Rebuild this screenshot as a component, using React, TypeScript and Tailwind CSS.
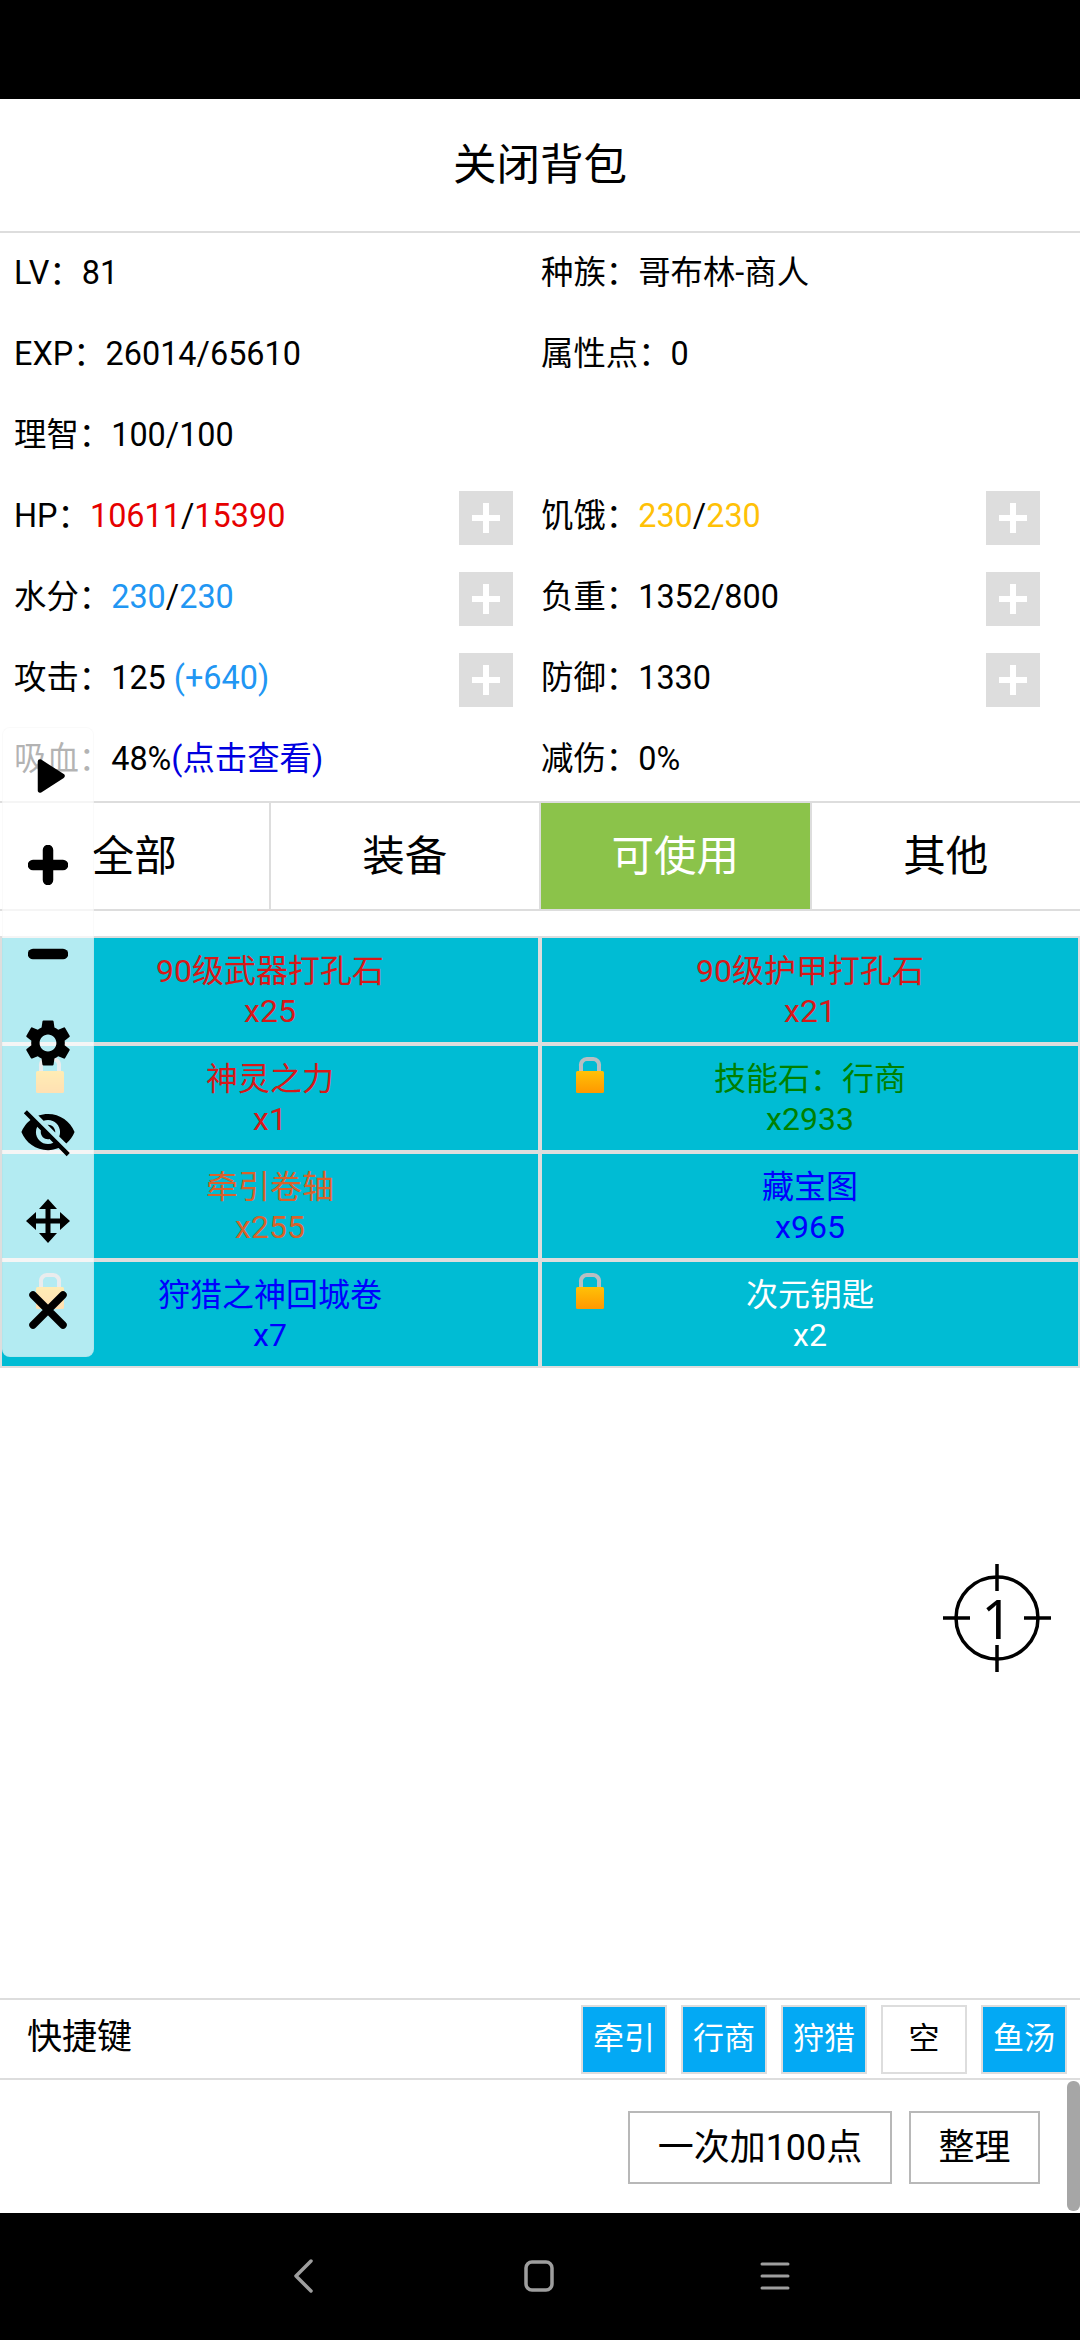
import React from "react";
import { MdSettings, MdVisibilityOff } from "react-icons/md";

const FONT = "font-['Roboto','Noto_Sans_CJK_SC',sans-serif]";

function Plus() {
  return (
    <div className="w-[54px] h-[54px] mt-[2px] bg-[#dddddd] flex items-center justify-center shrink-0">
      <svg width="28" height="30" viewBox="0 0 28 30">
        <path d="M0 12h28v6H0zM11 0h6v30h-6z" fill="#ffffff" />
      </svg>
    </div>
  );
}

function Lock({ className }: { className: string }) {
  return (
    <svg className={className} width="28" height="36" viewBox="0 0 28 36">
      <defs>
        <linearGradient id="lockb" x1="0" y1="0" x2="0" y2="1">
          <stop offset="0" stopColor="#ffc107" />
          <stop offset="1" stopColor="#ff9800" />
        </linearGradient>
      </defs>
      <path d="M5 15V9a6 6 0 0 1 6-7h6a6 6 0 0 1 6 7v6" fill="none" stroke="#b9bec2" strokeWidth="4" />
      <rect x="0" y="14" width="28" height="22" rx="1.5" fill="url(#lockb)" />
    </svg>
  );
}

function Stat({ label, children, plus }: { label: string; children: React.ReactNode; plus?: boolean }) {
  return (
    <div className="h-[81px] flex items-center justify-between pr-[14px]">
      <div className="pl-[14px] text-[32.4px] leading-none whitespace-nowrap">
        {label}：{children}
      </div>
      {plus && <Plus />}
    </div>
  );
}

function Row({ left, right }: { left: React.ReactNode; right: React.ReactNode }) {
  return (
    <div className="grid grid-cols-[527px_527px] gap-x-0">
      {left}
      {right}
    </div>
  );
}

function Item({ name, count, color, lock }: { name: string; count: string; color: string; lock?: boolean }) {
  return (
    <div className={`relative h-[104px] bg-[#00bcd4] flex flex-col items-center justify-center pt-[2px] text-[32px] leading-[40px] ${color}`}>
      {lock && <Lock className="absolute left-[34px] top-[11px]" />}
      <div>{name}</div>
      <div>{count}</div>
    </div>
  );
}

function Key({ label, empty }: { label: string; empty?: boolean }) {
  return (
    <div
      className={`w-[86px] h-[69px] border-2 border-[#dddddd] flex items-center justify-center text-[31px] ${
        empty ? "bg-white text-black" : "bg-[#03a9f4] text-white"
      }`}
    >
      {label}
    </div>
  );
}

function FloatIcon({ children }: { children: React.ReactNode }) {
  return <div className="h-[89px] flex items-center justify-center">{children}</div>;
}

export default function App() {
  return (
    <div className={`relative w-[1080px] h-[2340px] bg-white text-black overflow-hidden flex flex-col ${FONT}`}>
      <div className="h-[99px] bg-black shrink-0" />

      <div className="h-[134px] pt-[2px] border-b-[2px] border-[#dddddd] flex items-center justify-center text-[43.5px] shrink-0">
        关闭背包
      </div>

      <div className="shrink-0 pb-[1px]">
        <Row left={<Stat label="LV">81</Stat>} right={<Stat label="种族">哥布林-商人</Stat>} />
        <Row left={<Stat label="EXP">26014/65610</Stat>} right={<Stat label="属性点">0</Stat>} />
        <Row left={<Stat label="理智">100/100</Stat>} right={<div />} />
        <Row
          left={
            <Stat label="HP" plus>
              <span className="text-[#e60000]">10611</span>/<span className="text-[#e60000]">15390</span>
            </Stat>
          }
          right={
            <Stat label="饥饿" plus>
              <span className="text-[#ffc107]">230</span>/<span className="text-[#ffc107]">230</span>
            </Stat>
          }
        />
        <Row
          left={
            <Stat label="水分" plus>
              <span className="text-[#2196f3]">230</span>/<span className="text-[#2196f3]">230</span>
            </Stat>
          }
          right={<Stat label="负重" plus>1352/800</Stat>}
        />
        <Row
          left={
            <Stat label="攻击" plus>
              125 <span className="text-[#2196f3]">(+640)</span>
            </Stat>
          }
          right={<Stat label="防御" plus>1330</Stat>}
        />
        <Row
          left={
            <Stat label="吸血">
              48%<span className="text-[#0000e0]">(点击查看)</span>
            </Stat>
          }
          right={<Stat label="减伤">0%</Stat>}
        />
      </div>

      <div className="h-[110px] border-y-[2px] border-[#dddddd] grid grid-cols-4 gap-x-[2px] bg-[#dddddd] text-[42.5px] shrink-0">
        <div className="bg-white flex items-center justify-center pt-[2px]">全部</div>
        <div className="bg-white flex items-center justify-center pt-[2px]">装备</div>
        <div className="bg-[#8bc34a] text-white flex items-center justify-center pt-[2px]">可使用</div>
        <div className="bg-white flex items-center justify-center pt-[2px]">其他</div>
      </div>

      <div className="mt-[25px] grid grid-cols-2 gap-[4px] p-[2px] bg-[#dddddd] shrink-0">
        <Item name="90级武器打孔石" count="x25" color="text-[#d81818]" />
        <Item name="90级护甲打孔石" count="x21" color="text-[#d81818]" />
        <Item name="神灵之力" count="x1" color="text-[#d81818]" lock />
        <Item name="技能石：行商" count="x2933" color="text-[#008000]" lock />
        <Item name="牵引卷轴" count="x255" color="text-[#d9622b]" />
        <Item name="藏宝图" count="x965" color="text-[#0000ff]" />
        <Item name="狩猎之神回城卷" count="x7" color="text-[#0000ff]" lock />
        <Item name="次元钥匙" count="x2" color="text-white" lock />
      </div>

      <div className="flex-1" />

      <div className="h-[82px] border-y-[2px] border-[#dddddd] flex items-center justify-between pl-[27px] pr-[13px] shrink-0">
        <div className="text-[35px] leading-none -mt-[4px]">快捷键</div>
        <div className="flex gap-[14px]">
          <Key label="牵引" />
          <Key label="行商" />
          <Key label="狩猎" />
          <Key label="空" empty />
          <Key label="鱼汤" />
        </div>
      </div>

      <div className="relative h-[133px] flex items-start justify-end gap-[17px] pt-[31px] pr-[40px] shrink-0">
        <div className="w-[264px] h-[73px] border-2 border-[#b8b8b8] flex items-center justify-center text-[36px]">一次加100点</div>
        <div className="w-[131px] h-[73px] border-2 border-[#b8b8b8] flex items-center justify-center text-[36px]">整理</div>
        <div className="absolute right-0 top-[1px] w-[13px] h-[130px] rounded-[6px] bg-[#a6a6a6]" />
      </div>

      <div className="h-[127px] bg-black flex items-center justify-center shrink-0 pb-[2px] pl-[3px]">
        <svg className="mr-[210px]" width="20" height="34" viewBox="0 0 20 34" fill="none" stroke="#9e9e9e" strokeWidth="3.5" strokeLinecap="round" strokeLinejoin="round">
          <path d="M17 2 2 17l15 15" />
        </svg>
        <svg className="mr-[206px]" width="30" height="32" viewBox="0 0 30 32" fill="none" stroke="#9e9e9e" strokeWidth="3.5">
          <rect x="2" y="2" width="26" height="28" rx="6" />
        </svg>
        <svg width="30" height="28" viewBox="0 0 30 28" fill="none" stroke="#9e9e9e" strokeWidth="3" strokeLinecap="round">
          <path d="M2 2h26M2 14h26M2 26h26" />
        </svg>
      </div>

      <div className="absolute left-[2px] top-[727px] w-[92px] h-[630px] rounded-[8px] bg-white/70 border border-black/[0.02] pt-[3px]">
        <FloatIcon>
          <svg className="ml-[6px]" width="28" height="36" viewBox="0 0 28 36"><path d="M3 3.5 25.5 18 3 32.5Z" fill="#000" stroke="#000" strokeWidth="4.5" strokeLinejoin="round" /></svg>
        </FloatIcon>
        <FloatIcon>
          <svg width="40" height="40" viewBox="0 0 40 40" fill="none" stroke="#000" strokeWidth="10.5" strokeLinecap="round"><path d="M20 5v30M5 20h30" /></svg>
        </FloatIcon>
        <FloatIcon>
          <svg width="40" height="40" viewBox="0 0 40 40" fill="none" stroke="#000" strokeWidth="10.5" strokeLinecap="round"><path d="M5 20h30" /></svg>
        </FloatIcon>
        <FloatIcon>
          <MdSettings className="text-black" size={56} />
        </FloatIcon>
        <FloatIcon>
          <MdVisibilityOff className="text-black" size={58} />
        </FloatIcon>
        <FloatIcon>
          <svg width="44" height="44" viewBox="0 0 44 44">
            <path d="M19.5 6h5v32h-5zM6 19.5h32v5H6z" fill="#000" />
            <path d="M22 0l9 10H13zM22 44l-9-10h18zM0 22l10-9v18zM44 22l-10 9V13z" fill="#000" />
          </svg>
        </FloatIcon>
        <FloatIcon>
          <svg width="38" height="38" viewBox="0 0 38 38" fill="none" stroke="#000" strokeWidth="7.5" strokeLinecap="round"><path d="M4 4l30 30M34 4 4 34" /></svg>
        </FloatIcon>
      </div>

      <div className="absolute left-[943px] top-[1564px] w-[108px] h-[108px] flex items-center justify-center">
        <svg className="absolute inset-0" width="108" height="108" viewBox="0 0 108 108" fill="none" stroke="#000" strokeWidth="3.5">
          <circle cx="54" cy="54" r="41" />
          <path d="M54 0v27M54 81v27M0 54h27M81 54h27" />
        </svg>
        <span className="text-[54px] leading-none font-['Noto_Sans',sans-serif]">1</span>
      </div>
    </div>
  );
}
